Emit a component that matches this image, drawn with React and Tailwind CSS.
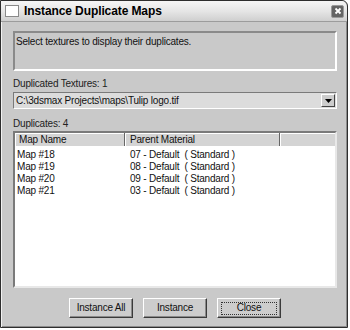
const rows = [
    { map: 'Map #18', material: '07 - Default  ( Standard )' },
    { map: 'Map #19', material: '08 - Default  ( Standard )' },
    { map: 'Map #20', material: '09 - Default  ( Standard )' },
    { map: 'Map #21', material: '03 - Default  ( Standard )' },
];

function Button({ children, focused }) {
    return (
        <div className="w-[64px] h-[20px] bg-[#cdcdcd] border border-t-white border-l-white border-r-[#3a3a3a] border-b-[#3a3a3a] shadow-[inset_-1px_-1px_0_#8a8a8a] flex items-center justify-center">
            {focused ? (
                <div className="w-[56px] h-[13px] border border-dotted border-[#333] flex items-center justify-center">{children}</div>
            ) : (
                children
            )}
        </div>
    );
}

export default function App() {
    return (
        <div className="w-[350px] h-[330px] bg-white font-['Liberation_Sans',Arial,sans-serif] text-[10px] tracking-[-0.2px] text-[#111] leading-[12px]">
            <div className="w-[348px] h-[328px] border border-[#2e2e2e] rounded-tr-[6px] bg-[#c9c9c9] flex flex-col shadow-[inset_1px_1px_0_#f2f2f2,inset_-1px_-1px_0_#8c8c8c]">
                {/* Title bar */}
                <div className="h-[21px] flex items-center pl-[4px] pr-[3px] border-b border-[#9c9c9c] rounded-tr-[6px] bg-gradient-to-b from-[#f6f6f6] via-[#e6e6e6] to-[#cfcfcf]">
                    <div className="w-[14px] h-[12px] bg-white border border-[#8a8a8a]" />
                    <span className="ml-[5px] font-bold text-[12px] tracking-[-0.1px] text-black">Instance Duplicate Maps</span>
                    <div className="ml-auto w-[13px] h-[13px] rounded-[2px] bg-[#646464] border border-[#9a9a9a] flex items-center justify-center">
                        <svg width="8" height="8" viewBox="0 0 8 8">
                            <path d="M1.5 1.5 L6.5 6.5 M6.5 1.5 L1.5 6.5" stroke="#fff" strokeWidth="1.8" />
                        </svg>
                    </div>
                </div>

                {/* Body */}
                <div className="flex flex-col pl-[12px] pt-[9px]">
                    <div className="w-[324px] h-[40px] border-2 border-t-[#8a8a8a] border-l-[#8a8a8a] border-r-white border-b-white px-[1px] pt-[3px]">
                        Select textures to display their duplicates.
                    </div>

                    <div className="mt-[7px] text-[#222]">Duplicated Textures: 1</div>
                    <div className="mt-[2px] w-[324px] h-[17px] bg-[#dcdcdc] border border-t-[#7a7a7a] border-l-[#7a7a7a] border-r-white border-b-white flex items-center pl-[2px] pr-[1px]">
                        <span>C:\3dsmax Projects\maps\Tulip logo.tif</span>
                        <div className="ml-auto w-[14px] h-[13px] bg-[#cdcdcd] border border-t-white border-l-white border-r-[#444] border-b-[#444] flex items-center justify-center">
                            <svg width="7" height="4" viewBox="0 0 7 4">
                                <path d="M0 0 H7 L3.5 4 Z" fill="#000" />
                            </svg>
                        </div>
                    </div>

                    <div className="mt-[9px] text-[#222]">Duplicates: 4</div>
                    <div className="mt-[1px] w-[324px] h-[157px] bg-white border-2 border-t-[#7a7a7a] border-l-[#7a7a7a] border-r-[#e8e8e8] border-b-[#e8e8e8]">
                        <div className="flex h-[13px] bg-[#d4d4d4]">
                            <div className="w-[110px] pl-[4px] border-r border-r-[#666] shadow-[inset_1px_1px_0_#fff] flex items-center">Map Name</div>
                            <div className="w-[155px] pl-[5px] border-r border-r-[#666] shadow-[inset_1px_1px_0_#fff] flex items-center">Parent Material</div>
                            <div className="flex-1 shadow-[inset_1px_1px_0_#fff]" />
                        </div>
                        <div className="pt-[3px]">
                            {rows.map((r) => (
                                <div key={r.map} className="flex h-[12px]">
                                    <div className="w-[111px] pl-[2px]">{r.map}</div>
                                    <div className="pl-[4px] whitespace-pre">{r.material}</div>
                                </div>
                            ))}
                        </div>
                    </div>

                    <div className="mt-[10px] w-[324px] flex justify-center gap-[10px]">
                        <Button>Instance All</Button>
                        <Button>Instance</Button>
                        <Button focused>Close</Button>
                    </div>
                </div>
            </div>
        </div>
    );
}
